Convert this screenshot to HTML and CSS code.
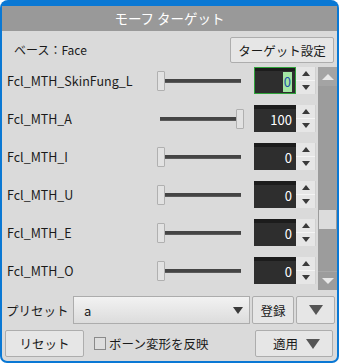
FILE: index.html
```html
<!DOCTYPE html>
<html lang="ja">
<head>
<meta charset="utf-8">
<link rel="stylesheet" href="styles.css">
</head>
<body>
<div class="window">
  <div class="panel">
    <div class="title">モーフ ターゲット</div>
    <div class="header">
      <span class="base">ベース：Face</span>
      <button class="btn target-btn">ターゲット設定</button>
    </div>
    <div class="list-area">
      <div class="list">
        <div class="row">
          <span class="label">Fcl_MTH_SkinFung_L</span>
          <div class="slider"><div class="track"></div><div class="thumb" style="left:0px"></div></div>
          <div class="num focused"><span class="sel">0</span></div>
          <div class="spin"><span class="up"></span><span class="dn"></span></div>
        </div>
        <div class="row">
          <span class="label">Fcl_MTH_A</span>
          <div class="slider"><div class="track"></div><div class="thumb" style="left:79px"></div></div>
          <div class="num">100</div>
          <div class="spin"><span class="up"></span><span class="dn"></span></div>
        </div>
        <div class="row">
          <span class="label">Fcl_MTH_I</span>
          <div class="slider"><div class="track"></div><div class="thumb" style="left:0px"></div></div>
          <div class="num">0</div>
          <div class="spin"><span class="up"></span><span class="dn"></span></div>
        </div>
        <div class="row">
          <span class="label">Fcl_MTH_U</span>
          <div class="slider"><div class="track"></div><div class="thumb" style="left:0px"></div></div>
          <div class="num">0</div>
          <div class="spin"><span class="up"></span><span class="dn"></span></div>
        </div>
        <div class="row">
          <span class="label">Fcl_MTH_E</span>
          <div class="slider"><div class="track"></div><div class="thumb" style="left:0px"></div></div>
          <div class="num">0</div>
          <div class="spin"><span class="up"></span><span class="dn"></span></div>
        </div>
        <div class="row">
          <span class="label">Fcl_MTH_O</span>
          <div class="slider"><div class="track"></div><div class="thumb" style="left:0px"></div></div>
          <div class="num">0</div>
          <div class="spin"><span class="up"></span><span class="dn"></span></div>
        </div>
      </div>
      <div class="scrollbar">
        <div class="sb-arrow sb-up"><span class="tri-up-w"></span></div>
        <div class="sb-track">
          <div class="sb-thumb"></div>
        </div>
        <div class="sb-arrow sb-down"><span class="tri-dn-w"></span></div>
      </div>
    </div>
    <div class="preset-row">
      <span class="preset-label">プリセット</span>
      <div class="combo"><span>a</span><span class="tri-dn"></span></div>
      <button class="btn reg-btn">登録</button>
      <button class="btn arrow-btn"><span class="tri-dn-big"></span></button>
    </div>
    <div class="bottom-row">
      <button class="btn reset-btn">リセット</button>
      <label class="check"><span class="box"></span>ボーン変形を反映</label>
      <button class="btn apply-btn"><span>適用</span><span class="tri-dn-big"></span></button>
    </div>
  </div>
</div>
</body>
</html>
```
FILE: styles.css
```css
* { box-sizing: border-box; }
html, body { margin: 0; padding: 0; background: #ffffff; }
body {
  width: 339px; height: 363px; overflow: hidden;
  font-family: "Noto Sans CJK JP", "Noto Sans", sans-serif;
  font-size: 12px; color: #1a1a1a;
}
.window {
  width: 339px; height: 363px;
  background: #0a78d4;
  border-radius: 8px 8px 7px 7px;
  padding: 6px 2px 2px 2px;
}
.panel {
  background: #dadada;
  height: 100%;
  display: flex; flex-direction: column;
  border-radius: 0 0 5px 5px;
}
.title {
  height: 25px; background: #999999; color: #ffffff;
  text-align: center; line-height: 25px; font-size: 13.5px;
}
.header {
  height: 36px; display: flex; align-items: center; justify-content: space-between;
  padding: 0 3px 0 12px;
}
.btn {
  font-family: inherit; font-size: 12px; color: #1a1a1a;
  background: #e6e6e6; border: 1px solid #adadad; border-radius: 2px;
  padding: 0; display: flex; align-items: center; justify-content: center;
}
.target-btn { width: 104px; height: 26px; margin-top: 2px; font-size: 12.5px; }
.list-area { display: flex; height: 223px; }
.list { flex: 1; display: flex; flex-direction: column; gap: 11px; }
.row { height: 27px; display: flex; align-items: center; }
.label { width: 155px; padding-left: 5px; font-size: 12.5px; }
.slider { position: relative; width: 87px; height: 27px; }
.track {
  position: absolute; left: 3px; right: 3px; top: 12px; height: 4px;
  background: #444444; border-bottom: 1px solid #5a5a5a;
}
.thumb {
  position: absolute; top: 4px; width: 8px; height: 20px;
  background: #e2e2e2; border: 1px solid #b0b0b0; border-radius: 1px;
}
.num {
  margin-left: 10px; width: 42px; height: 27px;
  background: #2e2e2e; border-top: 4px solid #1c1c1c;
  color: #ffffff; font-size: 13px; text-align: right;
  padding-right: 4px; line-height: 22px;
}
.num.focused {
  border: 1px solid #2fa33a; border-top: 4px solid #1c1c1c;
  padding-right: 3px;
  outline: 1px solid #2fa33a; outline-offset: -1px;
}
.sel { background: #a3e6a3; color: #1d4fa8; display: inline-block; padding: 0 1px; line-height: 20px; }
.spin {
  width: 20px; height: 27px; background: #e6e6e6;
  display: flex; flex-direction: column; border-right: 1px solid #d0d0d0;
}
.spin .up, .spin .dn { flex: 1; display: flex; align-items: center; justify-content: center; }
.spin .up { border-bottom: 1px solid #f4f4f4; }
.spin .up::after {
  content: ""; border-left: 4px solid transparent; border-right: 4px solid transparent;
  border-bottom: 5px solid #3a3a3a;
}
.spin .dn::after {
  content: ""; border-left: 4px solid transparent; border-right: 4px solid transparent;
  border-top: 5px solid #3a3a3a;
}
.scrollbar {
  width: 19px; background: #9c9c9c; display: flex; flex-direction: column;
}
.sb-arrow { height: 19px; display: flex; align-items: center; justify-content: center; background: #a4a4a4; }
.sb-down { background: #9c9c9c; border-top: 1px solid #a8a8a8; }
.tri-up-w { border-left: 6px solid transparent; border-right: 6px solid transparent; border-bottom: 6px solid #e8e8e8; }
.tri-dn-w { border-left: 6px solid transparent; border-right: 6px solid transparent; border-top: 6px solid #e8e8e8; }
.sb-track { flex: 1; padding-top: 124px; }
.sb-thumb { margin: 0 1px; height: 19px; background: #dcdcdc; }
.preset-row {
  display: flex; align-items: center; height: 28px; margin-top: 6px; padding-left: 4px;
}
.preset-label { width: 67px; font-size: 12.5px; }
.combo {
  width: 177px; height: 28px; border: 1px solid #acacac;
  background: linear-gradient(#f2f2f2, #dcdcdc);
  display: flex; align-items: center; justify-content: space-between;
  padding: 0 6px 0 10px; font-size: 13px;
}
.tri-dn { border-left: 5px solid transparent; border-right: 5px solid transparent; border-top: 7px solid #3a3a3a; }
.tri-dn-big { border-left: 7px solid transparent; border-right: 7px solid transparent; border-top: 10px solid #555555; }
.reg-btn { width: 42px; height: 28px; margin-left: 2px; font-size: 12.5px; }
.arrow-btn { width: 39px; height: 28px; margin-left: 2px; }
.bottom-row { display: flex; align-items: center; height: 27px; margin-top: 6px; padding-left: 3px; }
.reset-btn { width: 79px; height: 27px; font-size: 12.5px; }
.check { display: flex; align-items: center; margin-left: 10px; width: 161px; font-size: 12.5px; }
.box { width: 12px; height: 13px; border: 1px solid #8a8a8a; background: #dedede; margin-right: 3px; }
.apply-btn { width: 78px; height: 27px; justify-content: space-between; padding: 0 12px 0 17px; font-size: 12.5px; }
```
